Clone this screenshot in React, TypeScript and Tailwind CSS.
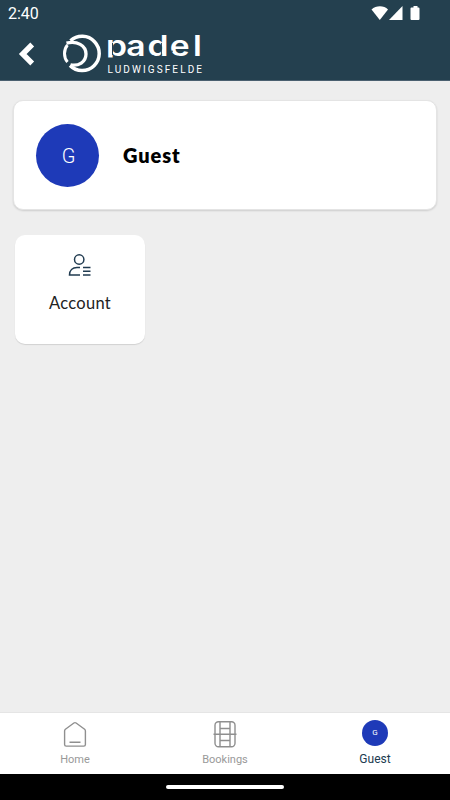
import React from 'react';

const StatusIcons: React.FC = () => (
  <svg className="h-[16px] w-[52px]" viewBox="0 0 52 16" fill="#fff">
    <path d="M.5 3.500C5-.8 13-.8 17 3.500L8.800 14z" />
    <path d="M31.500 0v14H18z" />
    <path d="M39.500 2.500q0-1 1-1h2V0h4v1.500h1q1 0 1 1V13q0 1-1 1h-7q-1 0-1-1z" />
  </svg>
);

const Logo: React.FC = () => (
  <svg className="h-[44px] w-[144px] overflow-visible" viewBox="60 32 144 44">
    <g fill="none" stroke="#fff">
      <path d="M70.500 40.900A17.100 17.100 0 1 1 70 65.500" strokeWidth="3.500" />
      <path d="M66.500 43.200C77 40.500 86 45.500 86 54c0 8-7.500 12.500-15.500 10.800" strokeWidth="3.300" />
      <path d="M67.500 45C63.500 49.500 63.500 57.500 67.500 62" strokeWidth="3" />
    </g>
    <text
      transform="scale(1.200 1)"
      x="88.300 105.300 122.900 141.400 160.800"
      y="55.700"
      fill="#fff"
      fontFamily="Inter, sans-serif"
      fontSize="28"
      fontWeight="600"
    >
      padel
    </text>
    {/* stencil cuts and the shortened stem of the wordmark */}
    <rect x="106" y="57.500" width="8" height="6" fill="#24404f" />
    <path d="M112.500 43v12M161.400 43v12M169 51.200h4" stroke="#24404f" strokeWidth="1" />
    <text
      x="107.500"
      y="72.500"
      textLength="94.500"
      lengthAdjust="spacing"
      fill="#fff"
      fontFamily="Roboto, sans-serif"
      fontSize="10"
    >
      LUDWIGSFELDE
    </text>
  </svg>
);

const AccountIcon: React.FC = () => (
  <svg className="h-[24px] w-[24px]" viewBox="0 0 24 24" fill="none" stroke="#203b50" strokeWidth="1.500">
    <circle cx="11.200" cy="6.500" r="4.700" />
    <path d="M12 14.500H9c-4.500 0-7.500 3-7.500 7.500H12M15 14.500h7.500M15 18.200h7.500M15 22h7.500" />
  </svg>
);

const HomeIcon: React.FC = () => (
  <svg className="h-[28px] w-[24px]" viewBox="0 0 24 28" fill="none" stroke="#8f8f8f" strokeWidth="1.400">
    <path d="M2.400 9.200 10.900 3q1.100-.8 2.200 0l8.500 6.200q.8.700.8 1.800v13.500q0 1.600-1.600 1.600H3.200q-1.600 0-1.600-1.600V11q0-1.100.8-1.800zM6.500 22.300h11" />
  </svg>
);

const BookingsIcon: React.FC = () => (
  <svg className="h-[28px] w-[24px]" viewBox="0 0 24 28" fill="none" stroke="#8f8f8f" strokeWidth="1.400">
    <rect x="2" y="1.700" width="20" height="25" rx="3.500" />
    <path d="M7 1.700v25M17 1.700v25M7 8.500h10M7 20.500h10M.5 14.300h23" />
  </svg>
);

const App: React.FC = () => {
  return (
    <div className="flex h-[800px] w-[450px] flex-col overflow-hidden bg-[#eee] font-['Roboto',sans-serif]">
      <header className="h-[81px] shrink-0 border-b border-[#4b6070] bg-[#24404f] text-white">
        <div className="flex h-[28px] items-start justify-between pt-[6px] pr-[27px] pl-[8px]">
          <span className="text-[16px] leading-[16px]">2:40</span>
          <StatusIcons />
        </div>
        <div className="flex pt-[4px] pl-[18px]">
          <svg className="h-[44px] w-[42px]" viewBox="0 0 42 44">
            <path d="M14.200 12.500 4.700 22l9.500 9.500" fill="none" stroke="#fff" strokeWidth="5.400" />
          </svg>
          <Logo />
        </div>
      </header>

      <main className="flex-1 px-[13px] pt-[19px]">
        <div className="flex h-[110px] items-center rounded-[10px] border border-[#e4e4e4] bg-white pl-[22px] shadow-[0_1px_2px_rgba(0,0,0,0.14)]">
          <div className="flex h-[63px] w-[63px] items-center justify-center rounded-full bg-[#1e3ab8] text-[20px] font-[350] text-white">
            <span className="mt-[1px] ml-[2px]">G</span>
          </div>
          <h1 className="ml-[24px] font-['Lato',sans-serif] text-[20px] font-extrabold tracking-[0.9px] text-black">Guest</h1>
        </div>

        <button className="mt-[25px] ml-[2px] flex h-[109px] w-[130px] flex-col items-center rounded-[10px] bg-white pt-[18px] shadow-[0_1px_1px_rgba(0,0,0,0.12)]">
          <AccountIcon />
          <span className="mt-[14px] font-['Lato',sans-serif] text-[16.5px] leading-[24px] tracking-[0.3px] text-[#222]">Account</span>
        </button>
      </main>

      <nav className="grid h-[62px] shrink-0 grid-cols-3 border-t border-[#e5e5e5] bg-white text-[12px] text-[#999]">
        <div className="flex flex-col items-center pt-[7px]">
          <HomeIcon />
          <span className="mt-[4px] text-[11px] leading-[16px]">Home</span>
        </div>
        <div className="flex flex-col items-center pt-[7px]">
          <BookingsIcon />
          <span className="mt-[4px] text-[11px] leading-[16px]">Bookings</span>
        </div>
        <div className="flex flex-col items-center pt-[7px]">
          <div className="flex h-[26px] w-[26px] items-center justify-center rounded-full bg-[#1e3ab8] text-[8px] text-white">G</div>
          <span className="mt-[5px] leading-[16px] text-[#203b50]">Guest</span>
        </div>
      </nav>
      <div className="flex h-[26px] shrink-0 items-center justify-center bg-black">
        <div className="h-[4px] w-[118px] rounded-full bg-white" />
      </div>
    </div>
  );
};

export default App;
